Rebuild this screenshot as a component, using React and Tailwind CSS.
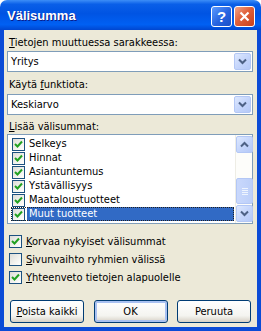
import React from "react"

const font = "font-['DejaVu_Sans_Condensed','Liberation_Sans',sans-serif]"

const Check = ({ checked }) => (
    <span className="w-[13px] h-[13px] shrink-0 border border-[#1c5180] bg-[linear-gradient(135deg,#dcdcd7_0%,#f3f3ef_60%,#ffffff_100%)] flex items-center justify-center">
        {checked && (
            <svg width="9" height="9" viewBox="0 0 9 9">
                <path d="M1 4 L3.5 6.5 L8 1.5" stroke="#21a121" strokeWidth="2" fill="none" />
            </svg>
        )}
    </span>
)

const Chevron = ({ up }) => (
    <svg width="9" height="7" viewBox="0 0 9 7">
        <path
            d={up ? "M1 5.5 L4.5 2 L8 5.5" : "M1 1.5 L4.5 5 L8 1.5"}
            stroke="#4d6185"
            strokeWidth="2"
            fill="none"
        />
    </svg>
)

const ArrowBtn = ({ up, className = "" }) => (
    <div className={`w-[17px] h-[17px] rounded-[2px] border border-[#b3c7f5] bg-[linear-gradient(135deg,#dde8fe_0%,#c3d4fb_55%,#b5c9f7_100%)] flex items-center justify-center ${className}`}>
        <Chevron up={up} />
    </div>
)

const Combo = ({ value }) => (
    <div className="h-[21px] border border-[#7f9db9] bg-white flex items-center justify-between pl-[3px] pr-[1px]">
        <span className="text-[11px] leading-[13px] text-black">{value}</span>
        <ArrowBtn />
    </div>
)

const items = ["Selkeys", "Hinnat", "Asiantuntemus", "Ystävällisyys", "Maataloustuotteet", "Muut tuotteet"]

const Option = ({ checked, first, rest }) => (
    <label className="flex items-center gap-[4px] h-[13px]">
        <Check checked={checked} />
        <span className="text-[11px] leading-[13px] text-black">
            <span className="underline">{first}</span>{rest}
        </span>
    </label>
)

const Button = ({ children, focus }) => (
    <button
        type="button"
        className={`w-[74px] h-[23px] rounded-[3px] border border-[#003c74] bg-[linear-gradient(180deg,#ffffff_0%,#f4f4f0_70%,#d6d0c5_100%)] text-[11px] leading-[13px] text-black ${focus ? "shadow-[inset_0_0_0_2px_#a9c1f1]" : ""}`}
    >
        {children}
    </button>
)

const App = () => {
    return (
        <div className={`w-[261px] h-[331px] flex flex-col ${font}`}>
            {/* title bar */}
            <div className="h-[30px] shrink-0 rounded-t-[7px] bg-[linear-gradient(180deg,#3d8ef7_0%,#0a5fe8_14%,#0054e3_45%,#0060f3_82%,#0046d0_100%)] flex items-center justify-between pl-[7px] pr-[6px]">
                <span className="font-['Liberation_Sans',sans-serif] font-bold text-[13px] text-white [text-shadow:1px_1px_0_#0a1e8c] mt-[1px]">
                    Välisumma
                </span>
                <div className="flex gap-[2px] mt-[2px]">
                    <div className="w-[21px] h-[21px] rounded-[3px] border border-white bg-[linear-gradient(135deg,#5b9bff_0%,#2663e0_55%,#1b4fc6_100%)] flex items-center justify-center">
                        <span className="font-['Liberation_Sans',sans-serif] font-bold text-[15px] leading-none text-white">?</span>
                    </div>
                    <div className="w-[21px] h-[21px] rounded-[3px] border border-white bg-[linear-gradient(135deg,#f0a58a_0%,#e0603a_45%,#c8401b_100%)] flex items-center justify-center">
                        <svg width="11" height="11" viewBox="0 0 11 11">
                            <path d="M1.5 1.5 L9.5 9.5 M9.5 1.5 L1.5 9.5" stroke="white" strokeWidth="2.2" />
                        </svg>
                    </div>
                </div>
            </div>

            {/* body */}
            <div className="flex-1 border-x-[4px] border-b-[4px] border-[#0b4bd6] bg-[#ece9d8] pl-[3px] pr-[4px] pt-[6px] flex flex-col">
                <div className="text-[11px] leading-[13px] text-black ml-[2px]">
                    <span className="underline">T</span>ietojen muuttuessa sarakkeessa:
                </div>
                <div className="mt-[2px]">
                    <Combo value="Yritys" />
                </div>
                <div className="text-[11px] leading-[13px] text-black ml-[2px] mt-[6px]">
                    Käytä <span className="underline">f</span>unktiota:
                </div>
                <div className="mt-[3px]">
                    <Combo value="Keskiarvo" />
                </div>
                <div className="text-[11px] leading-[13px] text-black ml-[2px] mt-[5px]">
                    <span className="underline">L</span>isää välisummat:
                </div>

                {/* list box */}
                <div className="mt-[1px] h-[90px] border border-[#7f9db9] bg-white flex">
                    <div className="flex-1 pt-[2px] pl-[3px] pr-[1px]">
                        {items.map((it, i) => {
                            const sel = i === items.length - 1
                            return (
                                <div
                                    key={it}
                                    className={`h-[14px] flex items-center gap-[2px] pl-[1px] ${sel ? "outline outline-1 outline-dotted outline-[#222] -outline-offset-1" : ""}`}
                                >
                                    <Check checked />
                                    <span
                                        className={`flex-1 h-[14px] pl-[2px] text-[11px] leading-[14px] ${sel ? "bg-[#316ac5] text-white" : "text-black"}`}
                                    >
                                        {it}
                                    </span>
                                </div>
                            )
                        })}
                    </div>
                    {/* scrollbar */}
                    <div className="w-[17px] bg-[#fdfdfa] border-l border-[#eeede5] flex flex-col items-center justify-between py-[1px]">
                        <ArrowBtn up />
                        <div className="flex-1 w-full flex flex-col justify-end pb-[1px]">
                            <div className="h-[26px] w-[17px] rounded-[2px] border border-[#b3c7f5] bg-[linear-gradient(90deg,#c9d8fc_0%,#bccff9_100%)] flex flex-col items-center justify-center gap-[1px]">
                                <div className="w-[6px] h-[1px] bg-[#eef4fe]" />
                                <div className="w-[6px] h-[1px] bg-[#eef4fe]" />
                                <div className="w-[6px] h-[1px] bg-[#eef4fe]" />
                                <div className="w-[6px] h-[1px] bg-[#eef4fe]" />
                            </div>
                        </div>
                        <ArrowBtn />
                    </div>
                </div>

                {/* options */}
                <div className="mt-[11px] ml-[2px] flex flex-col gap-[5px]">
                    <Option checked first="K" rest="orvaa nykyiset välisummat" />
                    <Option first="S" rest="ivunvaihto ryhmien välissä" />
                    <Option checked first="Y" rest="hteenveto tietojen alapuolelle" />
                </div>

                {/* buttons */}
                <div className="mt-[16px] flex justify-between pl-[3px] pr-[2px]">
                    <Button><span className="underline">P</span>oista kaikki</Button>
                    <Button focus>OK</Button>
                    <Button>Peruuta</Button>
                </div>
            </div>
        </div>
    )
}

export default App
